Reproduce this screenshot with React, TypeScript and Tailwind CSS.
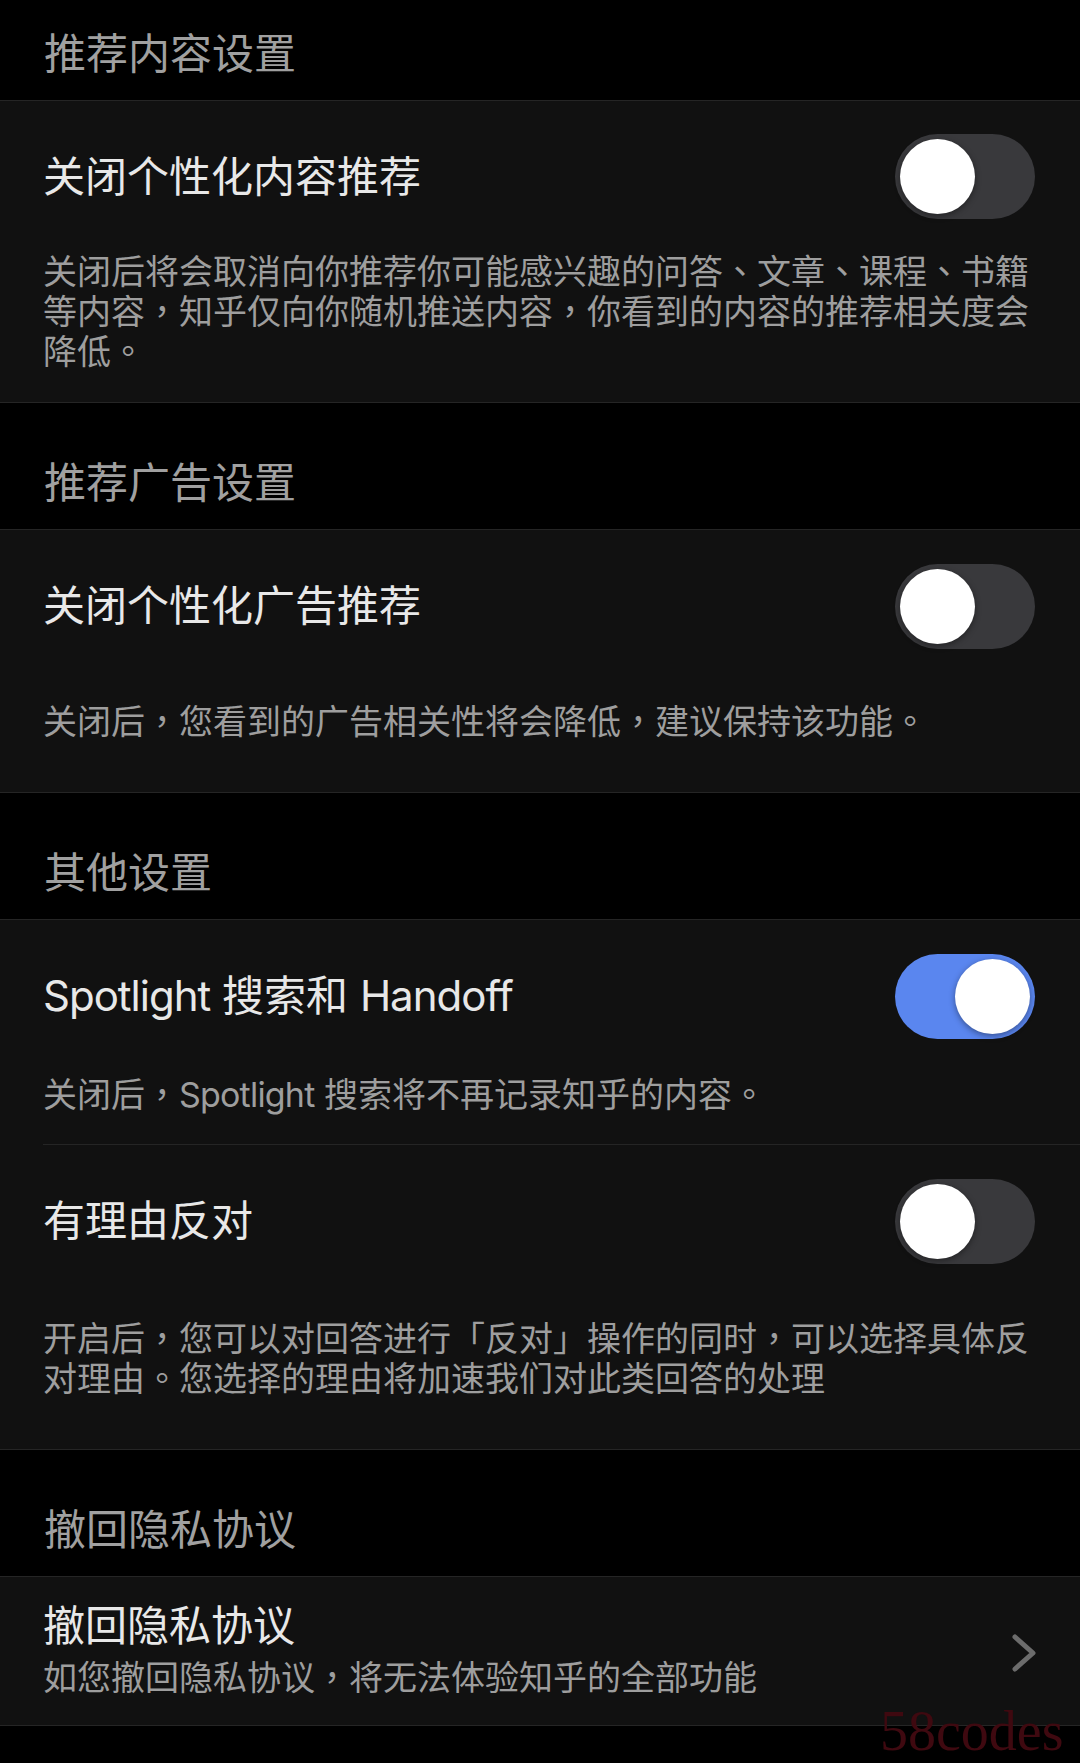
const fmt = (text: string, latin: string) =>
  text.split(/([，。、]|[A-Za-z]+)/).map((part, i) => {
    if (!part) return null
    if (/^[，。、]$/.test(part))
      return (
        <span key={i} className="font-['Noto_Sans_CJK_TC',sans-serif] leading-[0]">
          {part}
        </span>
      )
    if (/^[A-Za-z]+$/.test(part))
      return (
        <span key={i} className={latin}>
          {part}
        </span>
      )
    return <span key={i}>{part}</span>
  })

const Toggle = ({ on = false }: { on?: boolean }) => (
  <div
    className={`flex h-[85px] w-[140px] shrink-0 items-center rounded-full p-[5px] ${
      on ? 'justify-end bg-[#5a86ef]' : 'justify-start bg-[#39393c]'
    }`}
  >
    <div className="h-[75px] w-[75px] rounded-full bg-white shadow-[0_2px_6px_rgba(0,0,0,0.4)]" />
  </div>
)

const Header = ({ title, tall = true }: { title: string; tall?: boolean }) => (
  <div className={`flex items-end pb-[21px] pl-[44px] ${tall ? 'h-[126px]' : 'h-[100px]'}`}>
    <span className="text-[42px] leading-[50px] text-[#a0a0a0]">{title}</span>
  </div>
)

const Row = ({ title, on, h }: { title: string; on?: boolean; h: string }) => (
  <div className={`flex items-center justify-between ${h}`}>
    <span className="text-[42px] leading-[50px] text-[#e8e8e8]">{fmt(title, 'tracking-[-1px]')}</span>
    <Toggle on={on} />
  </div>
)

const Desc = ({ lines, className = '' }: { lines: string[]; className?: string }) => (
  <div className={`text-[34px] leading-[40px] text-[#9e9e9e] ${className}`}>
    {lines.map((l, i) => (
      <p key={i} className="h-[40px] whitespace-nowrap">
        {fmt(l, 'tracking-[-0.8px]')}
      </p>
    ))}
  </div>
)

const Card = ({ children }: { children: React.ReactNode }) => (
  <div className="border-y border-[#252525] bg-[#111111] pl-[43px]">{children}</div>
)

export default function App() {
  return (
    <div className="relative min-h-screen w-[1080px] overflow-hidden bg-black font-[Inter,'Noto_Sans_CJK_SC',sans-serif]">
      <Header title="推荐内容设置" tall={false} />
      <Card>
        <div className="pr-[45px]">
          <Row title="关闭个性化内容推荐" h="h-[151px]" />
          <Desc
            className="pb-[30px]"
            lines={[
              '关闭后将会取消向你推荐你可能感兴趣的问答、文章、课程、书籍',
              '等内容，知乎仅向你随机推送内容，你看到的内容的推荐相关度会',
              '降低。',
            ]}
          />
        </div>
      </Card>

      <Header title="推荐广告设置" />
      <Card>
        <div className="pr-[45px]">
          <Row title="关闭个性化广告推荐" h="h-[152px]" />
          <Desc className="pt-[20px] pb-[50px]" lines={['关闭后，您看到的广告相关性将会降低，建议保持该功能。']} />
        </div>
      </Card>

      <Header title="其他设置" />
      <Card>
        <div className="border-b border-[#252525] pr-[45px]">
          <Row title="Spotlight 搜索和 Handoff" on h="h-[152px]" />
          <Desc className="pt-[3px] pb-[29px]" lines={['关闭后，Spotlight 搜索将不再记录知乎的内容。']} />
        </div>
        <div className="pr-[45px]">
          <Row title="有理由反对" h="h-[152px]" />
          <Desc
            className="pt-[22px] pb-[50px]"
            lines={[
              '开启后，您可以对回答进行「反对」操作的同时，可以选择具体反',
              '对理由。您选择的理由将加速我们对此类回答的处理',
            ]}
          />
        </div>
      </Card>

      <Header title="撤回隐私协议" />
      <Card>
        <div className="flex items-center justify-between pt-[24px] pb-[20px] pr-[42px]">
          <div className="flex flex-col">
            <span className="h-[50px] text-[42px] leading-[50px] text-[#e8e8e8]">撤回隐私协议</span>
            <span className="h-[54px] text-[34px] leading-[54px] text-[#9e9e9e]">
              {fmt('如您撤回隐私协议，将无法体验知乎的全部功能', '')}
            </span>
          </div>
          <svg width="28" height="40" viewBox="0 0 28 40" fill="none">
            <path d="M5 4 L23 20 L5 36" stroke="#6c6c6c" strokeWidth="5" strokeLinecap="round" strokeLinejoin="round" />
          </svg>
        </div>
      </Card>

      <span className="absolute left-[880px] top-[1703px] font-['Liberation_Serif',serif] text-[56px] leading-[56px] text-[#3f0910]">
        58codes
      </span>
    </div>
  )
}
